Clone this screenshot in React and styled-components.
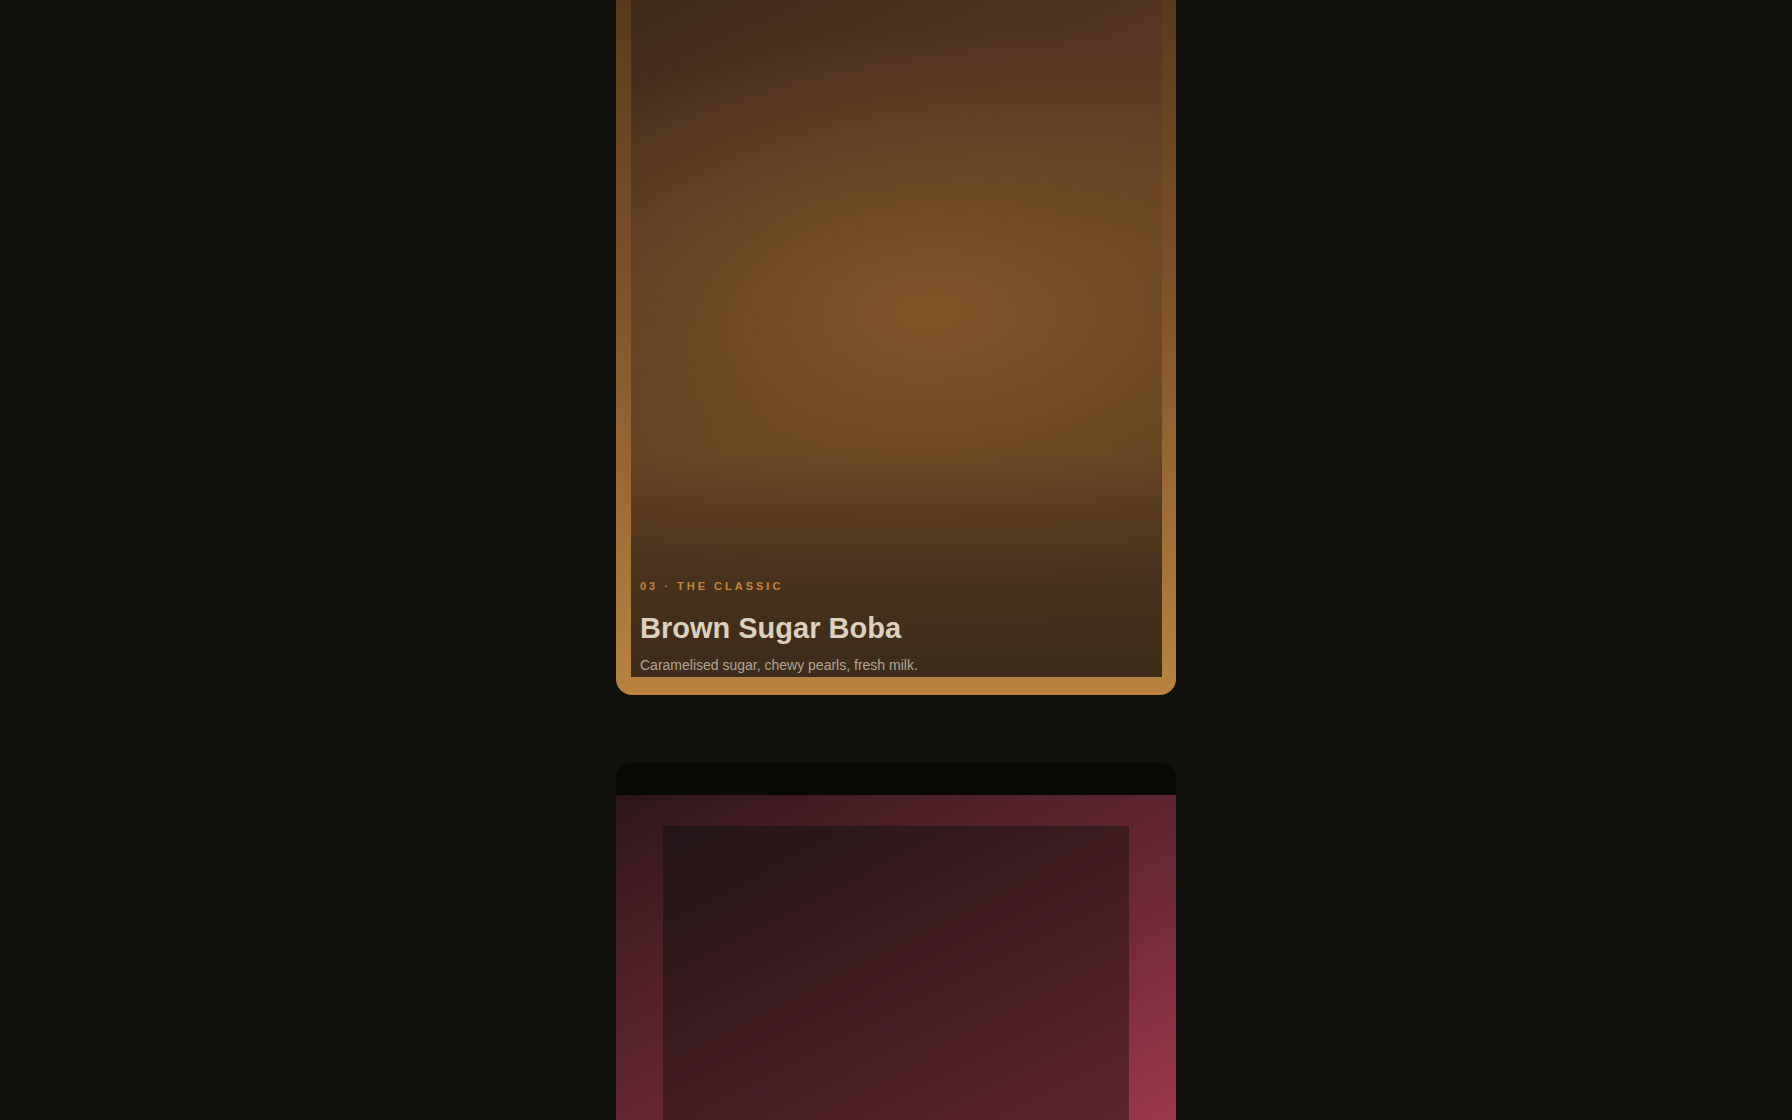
import React from "react";
import styled, { createGlobalStyle } from "styled-components";

const GlobalStyle = createGlobalStyle`
  html, body {
    margin: 0;
    padding: 0;
    background: #11100c;
    overflow: hidden;
    height: 100%;
  }
  body {
    font-family: "Liberation Sans", Arial, sans-serif;
  }
`;

const Page = styled.div`
  display: flex;
  flex-direction: column;
  align-items: center;
  gap: 68px;
  margin-top: -43px;
`;

const DrinkCard = styled.article`
  width: 560px;
  box-sizing: border-box;
  padding: 14px 14px 18px 15px;
  border-radius: 16px;
  background: linear-gradient(180deg, #553719 0%, #7f5228 45%, #b9823f 100%);
`;

const Photo = styled.div`
  height: 702px;
  display: flex;
  flex-direction: column;
  justify-content: flex-end;
  padding: 0 9px 4px;
  overflow: hidden;
  background:
    linear-gradient(180deg, rgba(60, 42, 24, 0) 68%, rgba(62, 43, 25, 0.8) 90%, rgba(60, 42, 25, 0.95) 100%),
    radial-gradient(ellipse 95% 40% at 56% 48%, rgba(132, 89, 42, 0.9) 0%, rgba(122, 81, 38, 0.55) 45%, rgba(100, 66, 32, 0) 100%),
    linear-gradient(155deg, #3d2817 0%, #523520 28%, #624122 55%, #5d3f20 100%);
`;

const Kicker = styled.div`
  font-size: 11px;
  font-weight: 700;
  letter-spacing: 3px;
  color: #c4843b;
  text-transform: uppercase;
  line-height: 14px;
  margin-bottom: 19px;
`;

const Title = styled.h2`
  margin: 0 0 13px;
  font-size: 29px;
  font-weight: 700;
  line-height: 32px;
  color: #ddd0bc;
`;

const Blurb = styled.p`
  margin: 0;
  font-size: 14px;
  line-height: 16px;
  color: #b3a594;
`;

const NextCard = styled.article`
  width: 560px;
  border-radius: 16px 16px 0 0;
  overflow: hidden;
  background: #0a0906;
  display: flex;
  flex-direction: column;
`;

const NextHeader = styled.div`
  height: 32px;
  background: #0a0906;
`;

const NextFrame = styled.div`
  height: 400px;
  padding: 31px 47px 0;
  background: linear-gradient(153deg, #2c161a 0%, #4a1e25 22%, #632733 45%, #7c2d3c 62%, #a23b4f 90%, #ad4055 100%);
`;

const NextImage = styled.div`
  height: 100%;
  background: linear-gradient(153deg, #221315 0%, #3b1b1f 36%, #471d24 51%, #5e2630 87%, #652a35 100%);
`;

export default function App() {
  return (
    <>
      <GlobalStyle />
      <Page>
        <DrinkCard>
          <Photo>
            <Kicker>03 · The Classic</Kicker>
            <Title>Brown Sugar Boba</Title>
            <Blurb>Caramelised sugar, chewy pearls, fresh milk.</Blurb>
          </Photo>
        </DrinkCard>
        <NextCard>
          <NextHeader />
          <NextFrame>
            <NextImage />
          </NextFrame>
        </NextCard>
      </Page>
    </>
  );
}
